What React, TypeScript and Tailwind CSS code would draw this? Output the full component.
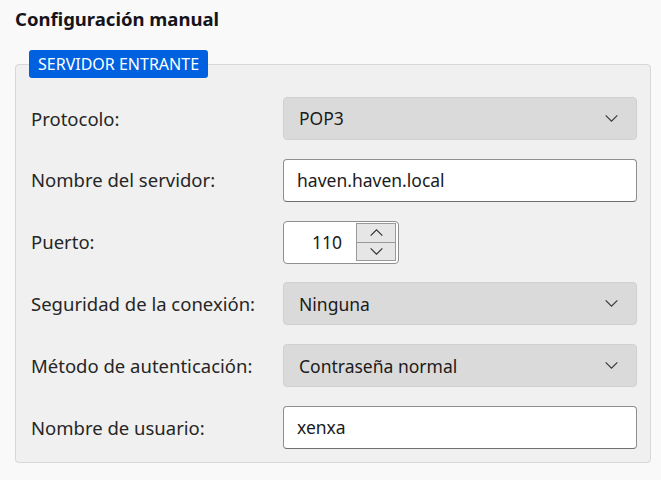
import React from "react";

const Chevron = ({ up = false, className = "" }: { up?: boolean; className?: string }) => (
  <svg viewBox="0 0 16 10" className={className} fill="none" stroke="currentColor" strokeWidth="1.3">
    {up ? <path d="M1.5 8.5 8 2l6.5 6.5" /> : <path d="M1.5 1.5 8 8l6.5-6.5" />}
  </svg>
);

const Select = ({ value }: { value: string }) => (
  <div className="flex h-[43px] items-center justify-between rounded-[4px] border border-[#d0d0d0] bg-[#dadada] pl-[15px] pr-[17px] text-[17.5px] text-[#1b1b1b]">
    <span>{value}</span>
    <Chevron className="h-[9px] w-[15px] text-[#3a3a3a]" />
  </div>
);

const TextInput = ({ value }: { value: string }) => (
  <div className="flex h-[43px] items-center rounded-[4px] border border-[#8f8f8f] border-b-[#6f6f6f] bg-white pl-[13px] text-[17.5px] text-[#1b1b1b]">
    {value}
  </div>
);

const Spinner = ({ value }: { value: number }) => (
  <div className="flex h-[43px] w-[116px] items-center rounded-[4px] border border-[#8f8f8f] bg-white pr-[2px]">
    <span className="flex-1 pr-[14px] text-right text-[17.5px] text-[#1b1b1b]">{value}</span>
    <div className="flex h-[38px] w-[40px] flex-col border border-[#9a9a9a]">
      <div className="flex flex-1 items-center justify-center border-b border-[#9a9a9a] bg-[#e6e6e6]">
        <Chevron up className="h-[9px] w-[17px] text-[#333]" />
      </div>
      <div className="flex flex-1 items-center justify-center bg-[#e6e6e6]">
        <Chevron className="h-[9px] w-[17px] text-[#333]" />
      </div>
    </div>
  </div>
);

const rows: { label: string; control: React.ReactNode }[] = [
  { label: "Protocolo:", control: <Select value="POP3" /> },
  { label: "Nombre del servidor:", control: <TextInput value="haven.haven.local" /> },
  { label: "Puerto:", control: <Spinner value={110} /> },
  { label: "Seguridad de la conexión:", control: <Select value="Ninguna" /> },
  { label: "Método de autenticación:", control: <Select value="Contraseña normal" /> },
  { label: "Nombre de usuario:", control: <TextInput value="xenxa" /> },
];

export default function App() {
  return (
    <div className="h-[480px] w-[661px] bg-[#f9f9fa] font-['Noto_Sans',sans-serif] text-[#1b1b1b]">
      <div className="pl-[15px] pr-[10px] pt-[7px]">
        <h1 className="text-[18.5px] font-bold leading-[24px] text-[#15141a]">Configuración manual</h1>
        <fieldset className="mt-[19px] rounded-[4px] border border-[#d7d7db] bg-[#f0f0f0] pb-[13px] pl-[15px] pr-[13px]">
          <legend className="-ml-[2px] rounded-[3px] bg-[#0061e0] px-[9px] text-[16px] leading-[28px] text-white">
            SERVIDOR ENTRANTE
          </legend>
          <div className="mt-[19px] grid grid-cols-[252px_1fr] items-center gap-y-[18.8px]">
            {rows.map((r) => (
              <React.Fragment key={r.label}>
                <div className="text-[18.5px] text-[#262626]">{r.label}</div>
                <div>{r.control}</div>
              </React.Fragment>
            ))}
          </div>
        </fieldset>
      </div>
    </div>
  );
}
